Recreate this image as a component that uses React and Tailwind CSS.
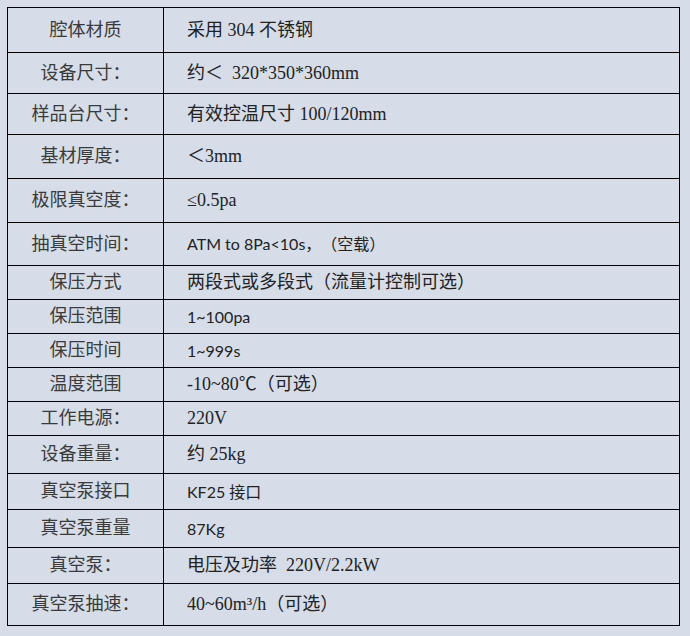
import React from 'react';

const serif = 'font-["Liberation_Serif","Noto_Sans_CJK_SC",serif] text-[18px]';
const sans = 'font-["Lato","Noto_Sans_CJK_SC",sans-serif] text-[16px]';

const rows = [
  { label: '腔体材质', value: '采用 304 不锈钢', h: 'h-[45px]' },
  { label: '设备尺寸：', value: '约＜  320*350*360mm', h: 'h-[41px]' },
  { label: '样品台尺寸：', value: '有效控温尺寸 100/120mm', h: 'h-[41px]' },
  { label: '基材厚度：', value: '＜3mm', h: 'h-[44px]' },
  { label: '极限真空度：', value: '≤0.5pa', h: 'h-[44px]' },
  { label: '抽真空时间：', value: 'ATM to 8Pa<10s，（空载）', h: 'h-[43px]', sans: true },
  { label: '保压方式', value: '两段式或多段式（流量计控制可选）', h: 'h-[34px]' },
  { label: '保压范围', value: '1~100pa', h: 'h-[34px]', sans: true },
  { label: '保压时间', value: '1~999s', h: 'h-[34px]', sans: true },
  { label: '温度范围', value: '-10~80℃（可选）', h: 'h-[34px]' },
  { label: '工作电源：', value: '220V', h: 'h-[34px]' },
  { label: '设备重量：', value: '约 25kg', h: 'h-[38px]' },
  { label: '真空泵接口', value: 'KF25 接口', h: 'h-[36px]', sans: true },
  { label: '真空泵重量', value: '87Kg', h: 'h-[38px]', sans: true },
  { label: '真空泵：', value: '电压及功率  220V/2.2kW', h: 'h-[36px]' },
  { label: '真空泵抽速：', value: '40~60m³/h（可选）', h: 'h-[42px]' },
];

function App() {
  return (
    <div className="w-[690px] h-[636px] bg-[#d6dde8] pt-[7px] pl-[7px] [text-spacing-trim:space-all]">
      <div className="w-[673px] border-l border-r border-b border-black text-[#3a3a3a]">
        {rows.map((row, i) => (
          <div key={i} className={`flex border-t border-black ${row.h}`}>
            <div className={`w-[156px] shrink-0 border-r border-black flex items-center justify-center ${serif}`}>
              {row.label}
            </div>
            <div className={`flex-1 flex items-center pl-[23px] whitespace-pre ${row.sans ? sans : serif} text-[#222]`}>
              {row.value}
            </div>
          </div>
        ))}
      </div>
    </div>
  );
}

export default App;
